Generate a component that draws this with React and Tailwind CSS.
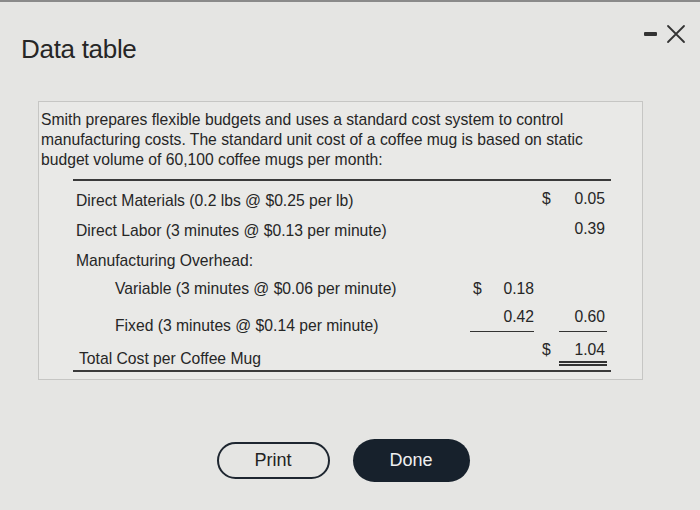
import React from 'react';

const rows = [
  { label: 'Direct Materials (0.2 lbs @ $0.25 per lb)', c3s: '$', c3: '0.05' },
  { label: 'Direct Labor (3 minutes @ $0.13 per minute)', c3: '0.39' },
  { label: 'Manufacturing Overhead:' },
];

const DataTable = () => {
  return (
    <div className="w-[700px] h-[510px] bg-[#e5e5e3] text-[#262626] relative overflow-hidden" style={{ fontFamily: '"Liberation Sans", Arial, sans-serif' }}>
      <div className="h-[2px] bg-[#8a8a8a]" />

      {/* Header */}
      <div className="flex justify-between items-start pl-[21px] pr-[13px]">
        <h1 className="text-[26px] mt-[32px] leading-[30px] tracking-[-0.3px]">Data table</h1>
        <div className="flex items-center gap-[8px] mt-[21px]">
          <div className="w-[13px] h-[4px] bg-[#333] rounded-[1px]" />
          <svg width="22" height="22" viewBox="0 0 22 22" className="text-[#333]">
            <path d="M3 3 L19 19 M19 3 L3 19" stroke="currentColor" strokeWidth="1.8" strokeLinecap="round" />
          </svg>
        </div>
      </div>

      {/* Box */}
      <div className="ml-[38px] mr-[57px] mt-[37px] border border-[#c6c6c4] bg-[#e9e9e7] pl-[2px] pt-[8px] pb-[7px]">
        <p className="text-[15.7px] leading-[20px] pr-[20px]">
          Smith prepares flexible budgets and uses a standard cost system to control manufacturing costs. The standard unit cost of a coffee mug is based on static budget volume of 60,100 coffee mugs per month:
        </p>

        <div className="ml-[32px] mr-[31px] mt-[9px] border-t-2 border-[#3a3a3a] pt-[3px] text-[15.7px]">
          {rows.map((r, i) => (
            <div key={i} className="flex items-center h-[30px]">
              <div className="flex-1 pl-[3px] pt-[3px] whitespace-nowrap">{r.label}</div>
              <div className="w-[64px]" />
              <div className="w-[25px]" />
              <div className="w-[48px] flex justify-between">
                <span className="-ml-[17px]">{r.c3s || ''}</span>
                <span className="pr-[2px]">{r.c3 || ''}</span>
              </div>
              <div className="w-[4px]" />
            </div>
          ))}

          <div className="flex items-center h-[30px]">
            <div className="flex-1 pl-[42px] whitespace-nowrap">Variable (3 minutes @ $0.06 per minute)</div>
            <div className="w-[64px] flex justify-between pl-[3px]">
              <span>$</span>
              <span>0.18</span>
            </div>
            <div className="w-[25px]" />
            <div className="w-[48px]" />
            <div className="w-[4px]" />
          </div>

          <div className="flex h-[34px]">
            <div className="flex-1 pl-[42px] pt-[10px] whitespace-nowrap">Fixed (3 minutes @ $0.14 per minute)</div>
            <div className="w-[64px] text-right border-b border-[#333] h-[28px] pt-[1px]">0.42</div>
            <div className="w-[25px]" />
            <div className="w-[48px] text-right border-b border-[#333] h-[28px] pt-[1px] pr-[2px]">0.60</div>
            <div className="w-[4px]" />
          </div>

          <div className="flex h-[34px] border-b-2 border-[#3a3a3a]">
            <div className="flex-1 pl-[6px] pt-[9px] whitespace-nowrap">Total Cost per Coffee Mug</div>
            <div className="w-[64px]" />
            <div className="w-[25px]" />
            <div className="w-[48px] h-[28px] border-b-[5px] border-double border-[#333] flex justify-between pt-[0px]">
              <span className="-ml-[17px]">$</span>
              <span className="pr-[2px]">1.04</span>
            </div>
            <div className="w-[4px]" />
          </div>
        </div>
      </div>

      {/* Buttons */}
      <div className="flex justify-center items-center gap-[23px] mt-[59px] pr-[14px]">
        <button className="w-[113px] h-[37px] rounded-full border-2 border-[#1e2630] text-[18px] text-[#222]">Print</button>
        <button className="w-[117px] h-[43px] rounded-full bg-[#17212c] text-[18px] text-[#f0f0f0]">Done</button>
      </div>
    </div>
  );
};

export default DataTable;
